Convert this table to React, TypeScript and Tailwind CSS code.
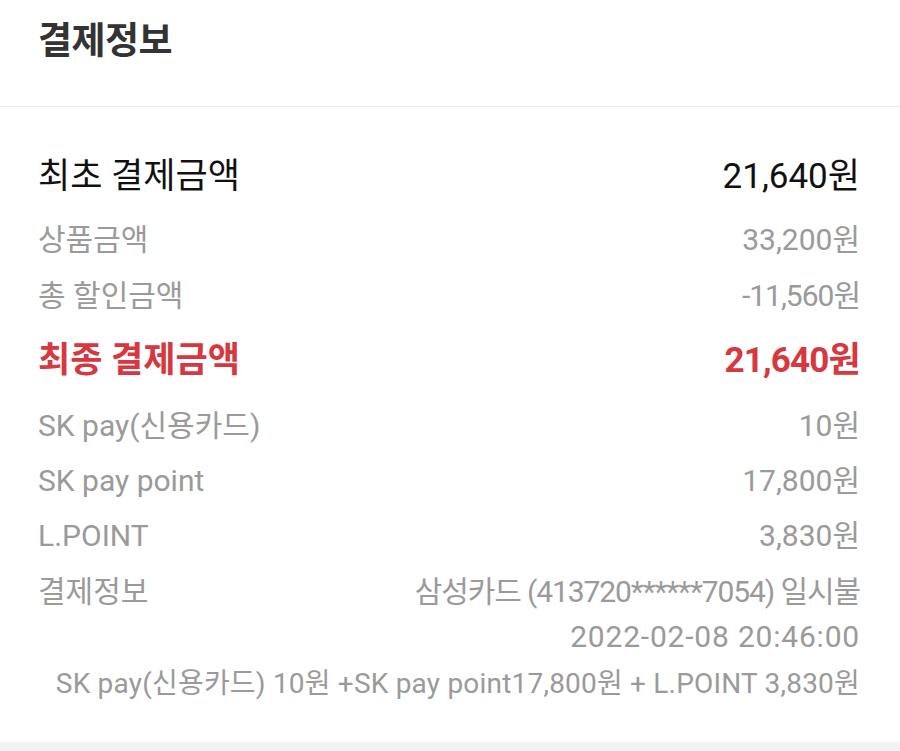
import React from "react";

const font = { fontFamily: 'Roboto, "Noto Sans CJK KR", sans-serif' };

function Row({
  label,
  value,
  cls,
  mt,
  valueCls = "",
}: {
  label: string;
  value: string;
  cls: string;
  mt: string;
  valueCls?: string;
}) {
  return (
    <div className={`flex h-[40px] items-center justify-between whitespace-nowrap ${mt} ${cls}`}>
      <span>{label}</span>
      <span className={valueCls}>{value}</span>
    </div>
  );
}

export default function App() {
  return (
    <div className="w-[900px] h-[751px] bg-white overflow-hidden" style={font}>
      <div className="h-[107px] border-b border-[#eeeeee] pl-[38px] pt-[17px]">
        <h1 className="text-[37px] font-bold leading-[50px] text-[#333333] tracking-[-0.5px]">
          결제정보
        </h1>
      </div>
      <div className="pl-[38px] pr-[40px] pt-[50px] pb-[38px]">
        <Row label="최초 결제금액" value="21,640원" cls="text-[35px] text-[#111111]" mt="" />
        <Row label="상품금액" value="33,200원" cls="text-[30px] text-[#9a9a9a]" mt="mt-[22px]" />
        <Row
          label="총 할인금액"
          value="-11,560원"
          cls="text-[30px] text-[#9a9a9a]"
          mt="mt-[16px]"
          valueCls="tracking-[-1px]"
        />
        <Row
          label="최종 결제금액"
          value="21,640원"
          cls="text-[35px] font-bold text-[#d7373f]"
          mt="mt-[26px]"
          valueCls="tracking-[-0.8px]"
        />
        <Row label="SK pay(신용카드)" value="10원" cls="text-[30px] text-[#9a9a9a]" mt="mt-[24px]" />
        <Row label="SK pay point" value="17,800원" cls="text-[30px] text-[#9a9a9a]" mt="mt-[15px]" />
        <Row label="L.POINT" value="3,830원" cls="text-[30px] text-[#9a9a9a]" mt="mt-[15px]" />
        <Row
          label="결제정보"
          value="삼성카드 (413720******7054) 일시불"
          cls="text-[30px] text-[#9a9a9a]"
          mt="mt-[16px]"
          valueCls="tracking-[-1.1px]"
        />
        <div className="mt-[5px] flex h-[40px] items-center justify-end text-[30px] text-[#9a9a9a] tracking-[0.8px]">
          2022-02-08 20:46:00
        </div>
        <div className="mt-[8px] flex h-[40px] items-center justify-end text-[28px] text-[#9a9a9a] whitespace-nowrap tracking-[0.2px]">
          SK pay(신용카드) 10원 +SK pay point17,800원 + L.POINT 3,830원
        </div>
      </div>
      <div className="h-[10px] bg-[#f2f2f2]" />
    </div>
  );
}
